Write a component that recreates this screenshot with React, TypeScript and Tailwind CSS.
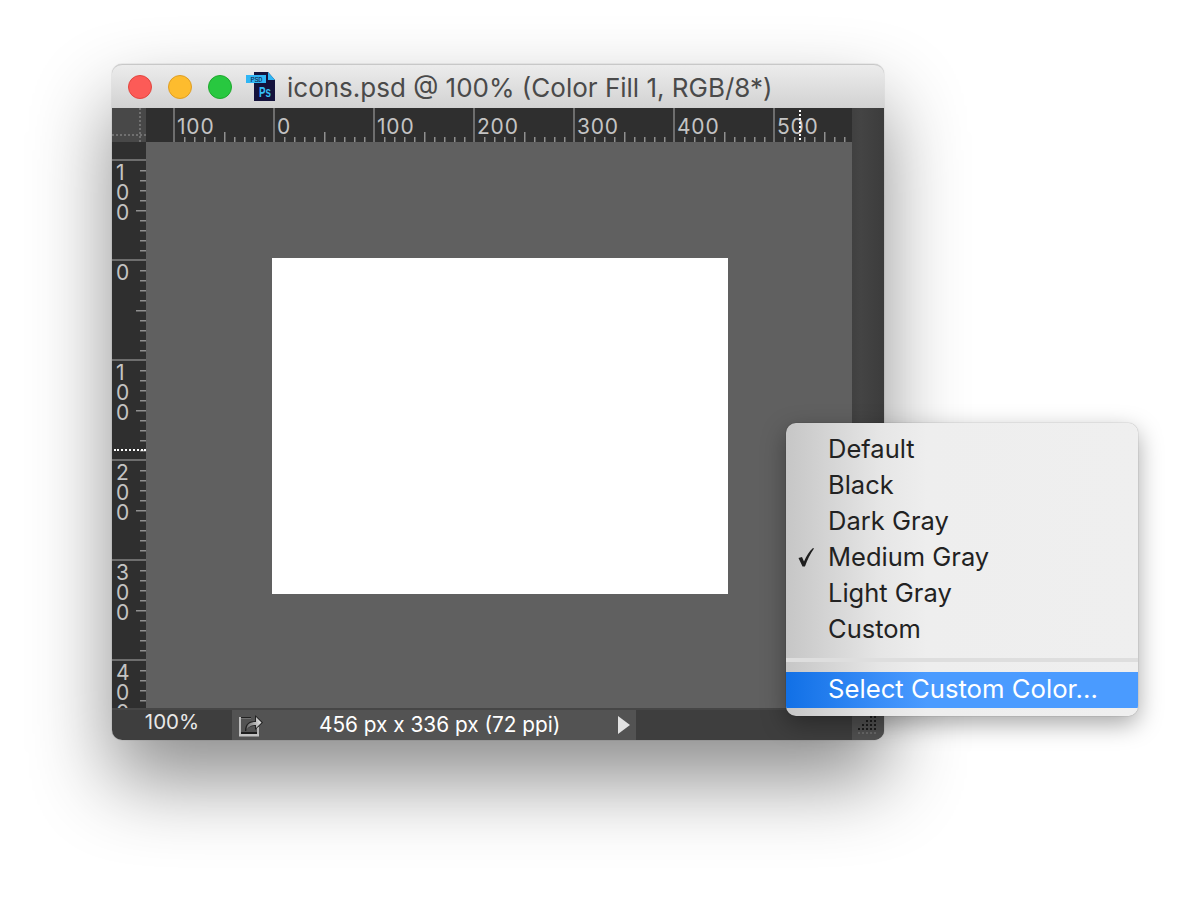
const topLabels = ['100', '0', '100', '200', '300', '400', '500']
const leftLabels = [
  ['1', '0', '0'],
  ['0'],
  ['1', '0', '0'],
  ['2', '0', '0'],
  ['3', '0', '0'],
  ['4', '0', '0'],
]
const menuItems = ['Default', 'Black', 'Dark Gray', 'Medium Gray', 'Light Gray', 'Custom']
const sans = 'font-["Inter","Liberation_Sans",sans-serif]'

function TopTicks() {
  return (
    <svg width="100" height="34" className="absolute left-0 top-0">
      {[10, 20, 30, 40, 50, 60, 70, 80, 90].map((x) => (
        <rect key={x} x={x - 1} y={x === 50 ? 24 : 29} width="1.5" height={x === 50 ? 10 : 5} fill="#8f8f8f" />
      ))}
    </svg>
  )
}

function LeftTicks() {
  return (
    <svg width="34" height="100" className="absolute left-0 top-0">
      {[10, 20, 30, 40, 50, 60, 70, 80, 90].map((y) => (
        <rect key={y} x={y === 50 ? 24 : 28} y={y - 1} width={y === 50 ? 10 : 6} height="1.5" fill="#8f8f8f" />
      ))}
    </svg>
  )
}

function PsdIcon() {
  return (
    <svg width="30" height="30" viewBox="0 0 30 30" className="shrink-0">
      <path d="M8 0h14l7 8v21H8z" fill="#14123c" />
      <path d="M22 0l7 8h-7z" fill="#2fb6f5" />
      <rect x="0" y="3" width="20" height="8" fill="#2fb6f5" />
      <text x="4.500" y="9.500" fontSize="7" textLength="12" lengthAdjust="spacing" fontFamily="Liberation Mono, monospace" fill="#14123c">PSD</text>
      <text x="13" y="25" fontSize="15" fontWeight="700" textLength="12" lengthAdjust="spacingAndGlyphs" fontFamily="Liberation Sans, sans-serif" fill="#35c0f8">Ps</text>
    </svg>
  )
}

function ShareIcon() {
  return (
    <svg width="28" height="26" viewBox="0 0 28 26" className="shrink-0">
      <defs>
        <linearGradient id="share-arrow" x1="0" x2="1" y1="0.6" y2="0.4">
          <stop offset="0" stopColor="#6f6f6f" />
          <stop offset="1" stopColor="#e4e4e4" />
        </linearGradient>
      </defs>
      <path d="M2 5h12v2H4v17H2z" fill="#bdbdbd" />
      <path d="M4 5h10v1.500H4z" fill="#222222" />
      <path d="M4 20h18v2H4z" fill="#1e1e1e" />
      <path d="M2 22h20v2.500H2z" fill="#c4c4c4" />
      <path d="M20 15h2v7h-2z" fill="#b5b5b5" />
      <path d="M8 19c0-7 4-10 10-10V3l8 7.500L18 18v-4c-4 0-7 1-9 5z" fill="#222222" />
      <path d="M9.500 18c0-6 3.500-8 9.500-8V5l5.500 5.500L19 16v-3c-4 0-7 1-9.500 5z" fill="url(#share-arrow)" />
    </svg>
  )
}

function GripDots() {
  const dots: [number, number, string][] = []
  for (let r = 0; r < 5; r++) {
    const first = r === 4 ? 0 : 3 - r
    for (let c = first; c < 5; c++) dots.push([c * 4, r * 4, r === 4 ? '#686868' : '#1c1c1c'])
  }
  return (
    <svg width="20" height="18" className="mb-[1px]">
      {dots.map(([x, y, fill]) => (
        <rect key={`${x}-${y}`} x={x} y={y} width="2" height="2" fill={fill} />
      ))}
    </svg>
  )
}

function ContextMenu() {
  return (
    <div className={`absolute left-[674px] top-[359px] z-10 w-[352px] overflow-hidden rounded-[10px] bg-[linear-gradient(90deg,#c6c6c6_0%,#e6e6e6_27%,#eeeeee_40%,#efefef_100%)] py-2 shadow-[0_0_1px_rgba(0,0,0,0.55),0_8px_24px_rgba(0,0,0,0.35)] ${sans}`}>
      {menuItems.map((item) => (
        <div key={item} className="relative flex h-9 items-center pl-[42px] pt-[1px] text-[25.500px] text-[#222222]">
          {item === 'Medium Gray' && (
            <svg width="18" height="20" viewBox="0 0 18 20" className="absolute left-[11px] top-[8px]">
              <path d="M1.500 11l3.500-1 2 4.500C9.500 9 12 4.500 16 1l1 .5C13 7 10.500 12.500 8 19.500H5.500z" fill="#1f1f1f" />
            </svg>
          )}
          {item}
        </div>
      ))}
      <div className="mb-[10px] mt-[11px] h-1 bg-[#dedede]" />
      <div className="flex h-9 items-center bg-[linear-gradient(90deg,#1170e6_0%,#3a8ef8_27%,#4a9bff_40%,#4a9bff_100%)] pb-[1px] pl-[42px] text-[25.700px] text-white">
        Select Custom Color...
      </div>
    </div>
  )
}

export default function App() {
  return (
    <div className="min-h-[900px] bg-white pl-[112px] pt-[64px]">
      <div className="relative w-[772px] rounded-[10px] shadow-[0_0_1px_rgba(0,0,0,0.5),0_40px_80px_rgba(0,0,0,0.45)]">
        <div className={`flex h-11 items-center rounded-t-[10px] border-t border-[#c8c8c8] bg-[linear-gradient(180deg,#ececec,#d2d2d2)] pl-4 ${sans}`}>
          <div className="flex gap-4">
            <div className="h-6 w-6 rounded-full border border-[#e2463f] bg-[#fc5b57]" />
            <div className="h-6 w-6 rounded-full border border-[#df9e24] bg-[#fdbc2e]" />
            <div className="h-6 w-6 rounded-full border border-[#1fa82e] bg-[#28c840]" />
          </div>
          <div className="ml-[14px] flex items-center gap-[11px]">
            <PsdIcon />
            <span className="pt-[2px] text-[26px] text-[#4a4a4a]">icons.psd @ 100% (Color Fill 1, RGB/8*)</span>
          </div>
        </div>

        <div className={`flex h-[600px] bg-[linear-gradient(90deg,#3a3a3a_0%,#3a3a3a_94%,#444444_97%,#3c3c3c_100%)] ${sans}`}>
          <div className="flex w-[34px] shrink-0 flex-col overflow-hidden bg-[#2f2f2f]">
            <div className="relative h-[34px] shrink-0 bg-[#484848]">
              <div className="absolute left-[27px] top-0 h-full border-l-2 border-dotted border-[#707070]" />
              <div className="absolute left-0 top-[26px] w-full border-t-2 border-dotted border-[#707070]" />
            </div>
            <div className="h-[17px] shrink-0" />
            {leftLabels.map((digits, i) => (
              <div key={i} className="relative h-[100px] shrink-0 border-t-2 border-[#6e6e6e] pl-[4px] pt-[2px] text-[21px] leading-[20px] text-[#c4c4c4]">
                <LeftTicks />
                {digits.map((d, j) => (
                  <div key={j}>{d}</div>
                ))}
              </div>
            ))}
          </div>

          <div className="flex min-w-0 flex-1 flex-col">
            <div className="flex h-[34px] w-[706px] shrink-0 overflow-hidden bg-[#2f2f2f]">
              <div className="w-[27px] shrink-0" />
              {topLabels.map((label, i) => (
                <div key={i} className="relative h-[34px] w-[100px] shrink-0 border-l-2 border-[#6e6e6e] pl-[2px] text-[21px] leading-[38px] tracking-[0.8px] text-[#c4c4c4]">
                  <TopTicks />
                  {label}
                </div>
              ))}
            </div>
            <div className="h-[566px] w-[706px] bg-[#606060] pl-[126px] pt-[116px]">
              <div className="h-[336px] w-[456px] bg-white" />
            </div>
          </div>
        </div>

        <div className={`flex h-8 rounded-b-[10px] border-t-2 border-[#464646] bg-[#3e3e3e] ${sans}`}>
          <div className="flex w-[120px] items-center justify-center pb-[5px] text-[20.500px] text-[#e8e8e8]">100%</div>
          <div className="flex w-[404px] items-center bg-[#535353] pl-[5px] pr-[6px] text-white">
            <ShareIcon />
            <span className="ml-[54px] flex-1 pb-[1px] text-[20.800px]">456 px x 336 px (72 ppi)</span>
            <div className="h-0 w-0 border-y-[9px] border-l-[12px] border-y-transparent border-l-[#e2e2e2]" />
          </div>
          <div className="flex-1" />
          <div className="flex w-8 items-center justify-center rounded-br-[10px] bg-[#505050]">
            <GripDots />
          </div>
        </div>

        <div className="absolute left-[687px] top-[46px] z-[5] h-[30px] border-l-2 border-dotted border-white" />
        <div className="absolute left-[2px] top-[385px] z-[5] w-[32px] border-t-2 border-dotted border-white" />

        <ContextMenu />
      </div>
    </div>
  )
}
